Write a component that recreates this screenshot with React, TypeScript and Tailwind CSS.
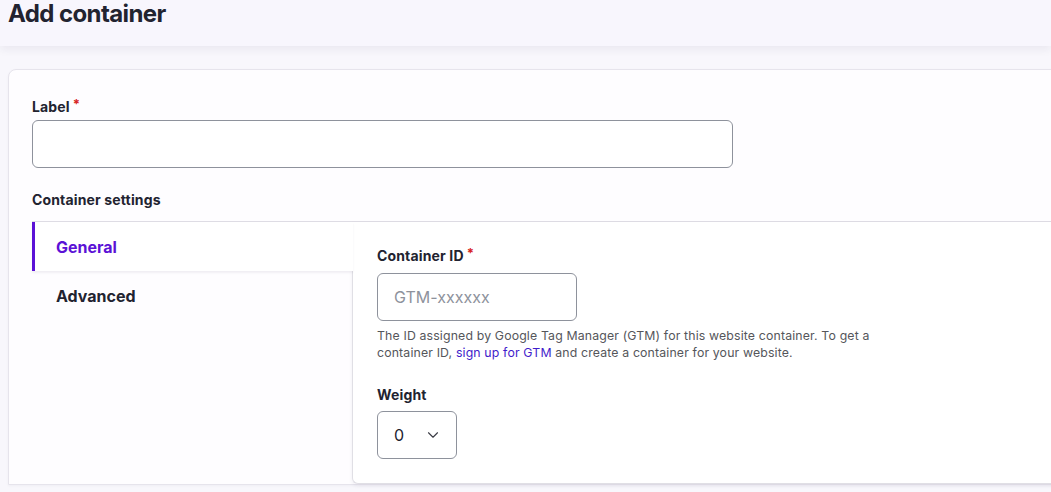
import { ChevronDown } from "lucide-react";

function Req() {
  return <span className="ml-[3px] align-top text-[13px] leading-none text-[#d72222]">*</span>;
}

export default function App() {
  return (
    <div className="h-[492px] overflow-hidden bg-[#f8f7fc] font-['Inter',sans-serif] text-[#222330]">
      <header className="relative z-10 h-[47px] bg-[#f8f6fd] px-2 shadow-[0_4px_8px_rgba(30,20,60,0.06)]">
        <h1 className="-mt-px text-[24px] font-bold leading-[29px] tracking-[-0.6px]">Add container</h1>
      </header>

      <div className="ml-2 mr-[-40px] mt-[23px] rounded-tl-lg border border-[#e6e4ec] bg-[#fefdff] pl-[23px] pt-[28px] shadow-[0_1px_3px_rgba(30,20,60,0.04)]">
        <label className="block text-[14px] font-bold leading-[18px] tracking-[0.15px]">
          Label
          <Req />
        </label>
        <input
          type="text"
          className="mt-[4px] block h-[48px] w-[701px] rounded-[6px] border border-[#8e929c] bg-white px-4 text-[16px] outline-none"
        />

        <h2 className="mt-[23px] text-[14px] font-bold leading-[18px] tracking-[0.15px]">Container settings</h2>

        <div className="mt-[12px] flex border-t border-[#dedce4]">
          <div className="w-[320px] shrink-0">
            <div className="relative z-10 -mr-px flex h-[49px] items-center border-l-[3px] border-[#5b11d6] bg-white pl-[21px] text-[16px] font-bold text-[#5b11d6] shadow-[0_2px_2px_rgba(30,20,60,0.06)]">
              General
            </div>
            <div className="flex h-[49px] items-center pl-6 text-[16px] font-bold">Advanced</div>
          </div>

          <div className="min-w-0 flex-1 rounded-bl-[6px] border-b border-l border-[#e0dfe5] bg-white pb-[24px] pl-6 pt-[25px] shadow-[0_2px_4px_rgba(30,20,60,0.06)]">
            <label className="block text-[14px] font-bold leading-[18px] tracking-[0.15px]">
              Container ID
              <Req />
            </label>
            <input
              type="text"
              placeholder="GTM-xxxxxx"
              className="mt-[8px] block h-[48px] w-[200px] rounded-[6px] border border-[#8e929c] bg-white px-4 text-[16px] outline-none placeholder:text-[#8e929c]"
            />
            <p className="mt-[6px] w-[530px] text-[12.3px] leading-[17px] tracking-[0.15px] text-[#55565b]">
              The ID assigned by Google Tag Manager (GTM) for this website container. To get a container ID,{" "}
              <a href="#" className="text-[#3f1dcb]">
                sign up for GTM
              </a>{" "}
              and create a container for your website.
            </p>

            <label className="mt-[25px] block text-[14px] font-bold leading-[18px] tracking-[0.15px]">Weight</label>
            <div className="mt-[7px] flex h-[48px] w-[80px] items-center justify-between rounded-[6px] border border-[#8e929c] bg-white pl-4 pr-[14px] text-[16px]">
              <span>0</span>
              <ChevronDown size={18} strokeWidth={1.5} className="text-[#3b3c45]" />
            </div>
          </div>
        </div>
      </div>
    </div>
  );
}
